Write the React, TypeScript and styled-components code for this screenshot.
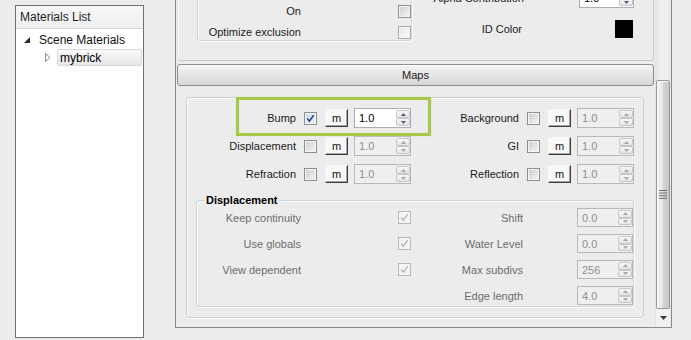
import React, {FC} from 'react'
import styled, {createGlobalStyle} from 'styled-components'

const GlobalStyle = createGlobalStyle`
  html, body {
    margin: 0;
    padding: 0;
  }
  body {
    background: #ececec;
    font-family: "Liberation Sans", Arial, sans-serif;
    font-size: 11px;
    color: #1a1a1a;
    overflow: hidden;
  }
`;

const Window = styled.div`
  display: flex;
  align-items: flex-start;
  width: 691px;
  height: 340px;
  padding-left: 15px;
  box-sizing: border-box;
  overflow: hidden;
`;

/* ---------- materials list ---------- */

const ListPanel = styled.div`
  flex: none;
  display: flex;
  flex-direction: column;
  margin-top: 5px;
  width: 129px;
  height: 333px;
  box-sizing: border-box;
  border: 1px solid #707070;
  background: #fff;
  font-size: 12px;
`;
const ListHeader = styled.div`
  height: 22px;
  line-height: 22px;
  padding-left: 4px;
  background: linear-gradient(#f7f7f7, #efefef);
  border-bottom: 1px solid #d8d8d8;
  color: #1e1e1e;
`;
const Tree = styled.div`
  display: flex;
  flex-direction: column;
  gap: 1px;
  padding-top: 2px;
`;
const TreeRow = styled.div<{ $indent: number }>`
  display: flex;
  align-items: center;
  height: 17px;
  padding-left: ${p => p.$indent}px;
  padding-right: 1px;
`;
const Expander = styled.span<{ $gap: number }>`
  flex: none;
  width: 11px;
  display: flex;
  justify-content: center;
  margin-right: ${p => p.$gap}px;
`;
const TreeText = styled.span`
  color: #111;
`;
const Selected = styled.span`
  flex: 1;
  height: 17px;
  box-sizing: border-box;
  display: flex;
  align-items: center;
  padding-left: 2px;
  border: 1px solid #d9d9d9;
  border-radius: 2px;
  background: linear-gradient(#fafafa, #e6e6e6);
  color: #000;
`;

/* ---------- scroll area ---------- */

const ScrollArea = styled.div`
  flex: none;
  display: flex;
  margin-left: 31px;
  margin-top: -2px;
  width: 497px;
  height: 330px;
  box-sizing: border-box;
  border: 1px solid #8a8a8a;
`;
const Viewport = styled.div`
  flex: 1;
  display: flex;
  flex-direction: column;
  justify-content: flex-end;
  overflow: hidden;
  padding-bottom: 9px;
  & > * {
    flex-shrink: 0;
  }
`;
const ScrollBar = styled.div`
  flex: none;
  width: 16px;
  display: flex;
  flex-direction: column;
  background: linear-gradient(90deg, #e2e2e2, #efefef 25%, #efefef 75%, #e6e6e6);
`;
const Track = styled.div`
  flex: 1;
`;
const Thumb = styled.div`
  height: 229px;
  margin: 0 1px;
  box-sizing: border-box;
  display: flex;
  align-items: center;
  justify-content: center;
  border: 1px solid #979797;
  border-radius: 2px;
  background: linear-gradient(90deg, #f4f4f4 0%, #e6e6e6 45%, #d3d3d3 55%, #c7c7c7 100%);
  box-shadow: inset 1px 1px 0 #fbfbfb;
`;
const ArrowButton = styled.div`
  height: 18px;
  margin: 0 1px;
  display: flex;
  align-items: center;
  justify-content: center;
  background: #f1f1f1;
`;

/* ---------- sections ---------- */

const SectionFrame = styled.div`
  margin: 0 1px;
  display: grid;
  grid-template-columns: 215px 1fr;
  align-items: end;
  padding: 0 19px 19px 19px;
  border: 1px solid #cbcbcb;
  border-left-color: #e4e4e4;
  border-radius: 0 0 3px 3px;
  box-shadow: inset 1px 1px 0 #fafafa;
`;
const GroupBox = styled.div<{ $pad: string }>`
  position: relative;
  box-sizing: border-box;
  border: 1px solid #d0d5d8;
  border-radius: 3px;
  padding: ${p => p.$pad};
  box-shadow: inset 1px 1px 0 #fbfbfb, 1px 1px 0 #fbfbfb;
`;
const GroupTitle = styled.span`
  position: absolute;
  top: -7px;
  left: 8px;
  padding: 0 1px;
  background: #ececec;
  font-weight: bold;
  color: #000;
  line-height: 13px;
`;
const Column = styled.div<{ $gap: number; $padBottom?: number }>`
  display: flex;
  flex-direction: column;
  gap: ${p => p.$gap}px;
  padding-bottom: ${p => p.$padBottom || 0}px;
`;
const PropRow = styled.div<{ $h: number }>`
  display: flex;
  align-items: center;
  height: ${p => p.$h}px;
`;
const PropLabel = styled.span<{ $w: number; $muted?: boolean }>`
  flex: none;
  width: ${p => p.$w}px;
  text-align: right;
  white-space: nowrap;
  color: ${p => (p.$muted ? '#6d6d6d' : '#1a1a1a')};
`;
const Push = styled.span`
  margin-left: auto;
  display: flex;
`;
const ColorSwatch = styled.span`
  width: 18px;
  height: 18px;
  margin-right: 1px;
  background: #000;
`;

const MapsHeader = styled.div`
  margin: 3px 1px 0 1px;
  height: 22px;
  box-sizing: border-box;
  display: flex;
  align-items: center;
  justify-content: center;
  border: 1px solid #8c8c8c;
  border-radius: 3px;
  background: linear-gradient(#f4f4f4, #e6e6e6 50%, #d6d6d6);
  box-shadow: inset 0 1px 0 #fdfdfd;
  color: #1a1a1a;
`;
const MapsBody = styled.div`
  position: relative;
  margin: 11px 11px 0 10px;
  padding: 10px 9px 10px 10px;
  border: 1px solid #d0d0d0;
  border-radius: 3px;
  box-shadow: inset 1px 1px 0 #fbfbfb, 0 1px 0 #fbfbfb;
`;
const MapGrid = styled.div`
  display: grid;
  grid-template-columns: 214px 223px;
  row-gap: 8px;
`;
const MapCell = styled.div`
  display: flex;
  align-items: center;
  justify-content: flex-end;
  height: 20px;
`;
const MapLabel = styled.span`
  margin-right: 8px;
  white-space: nowrap;
  color: #1a1a1a;
`;
const MButton = styled.span`
  flex: none;
  width: 23px;
  height: 18px;
  box-sizing: border-box;
  margin: 0 6px 0 8px;
  display: flex;
  align-items: center;
  justify-content: center;
  border: 1px solid;
  border-color: #f7f7f7 #3c3c3c #3c3c3c #f7f7f7;
  background: #f8f8f8;
  box-shadow: inset -1px -1px 0 #a6a6a6;
  color: #111;
  padding-bottom: 1px;
`;
const Highlight = styled.div`
  position: absolute;
  top: -1px;
  left: 49px;
  width: 195px;
  height: 39px;
  box-sizing: border-box;
  border: 3px solid #a7c94b;
  box-shadow: 0 0 1px #c9e08c, inset 0 0 1px #c9e08c;
  pointer-events: none;
`;
const DispGroup = styled(GroupBox)`
  margin: 16px 0 0 -1px;
  display: grid;
  grid-template-columns: 214px 1fr;
  align-items: start;
`;

/* ---------- controls ---------- */

const CheckFrame = styled.span<{ $state: 'normal' | 'disabled' | 'light' | 'active' }>`
  flex: none;
  width: 13px;
  height: 13px;
  box-sizing: border-box;
  display: flex;
  align-items: center;
  justify-content: center;
  border: 1px solid ${p => (p.$state === 'disabled' ? '#b9b9b9' : p.$state === 'light' ? '#aaaaaa' : '#8e8f8f')};
  background: ${p =>
    p.$state === 'disabled'
      ? '#f4f4f4'
      : p.$state === 'light'
        ? 'linear-gradient(135deg, #e6e6e6, #f9f9f9)'
        : p.$state === 'active'
          ? 'linear-gradient(135deg, #c4d8ec, #f2f7fc)'
          : 'linear-gradient(135deg, #cbcbcb, #f7f7f7)'};
  box-shadow: inset 0 0 0 1px #f5f5f5;
`;

const Checkbox: FC<{ checked?: boolean; state?: 'normal' | 'disabled' | 'light' | 'active' }> = ({checked, state = 'normal'}) => (
    <CheckFrame $state={state}>
        {checked && (
            <svg width="11" height="11" viewBox="0 0 11 11">
                <path d="M2.3 5.6 L4.4 8.2 L8.7 2.3" fill="none"
                      stroke={state === 'disabled' ? '#a9a9a9' : '#2a4384'}
                      strokeWidth={state === 'disabled' ? 1.1 : 1.6}/>
            </svg>
        )}
    </CheckFrame>
);

const SpinFrame = styled.span<{ $w: number; $h: number; $disabled?: boolean }>`
  flex: none;
  width: ${p => p.$w}px;
  height: ${p => p.$h}px;
  box-sizing: border-box;
  display: flex;
  border: 1px solid ${p => (p.$disabled ? '#b5b9bc' : '#abadb3')};
  background: ${p => (p.$disabled ? '#efefef' : '#fff')};
  color: ${p => (p.$disabled ? '#8e8e8e' : '#000')};
`;
const SpinValue = styled.span`
  flex: 1;
  display: flex;
  align-items: center;
  padding-left: 4px;
`;
const SpinButtons = styled.span`
  flex: none;
  width: 14px;
  display: flex;
  flex-direction: column;
  padding: 1px 0;
`;
const SpinButton = styled.span`
  flex: 1;
  display: flex;
  align-items: center;
  justify-content: center;
  border: 1px solid #c5c7c9;
  border-radius: 2px;
  background: linear-gradient(#f8f8f8, #e4e4e4);
`;

const Arrow: FC<{ up?: boolean; color: string }> = ({up, color}) => (
    <svg width="5" height="3" viewBox="0 0 5 3">
        <polygon points={up ? '2.5,0 5,3 0,3' : '0,0 5,0 2.5,3'} fill={color}/>
    </svg>
);

const Spin: FC<{ value: string; w?: number; h?: number; disabled?: boolean }> = ({value, w = 57, h = 20, disabled}) => {
    const c = disabled ? '#a8a8a8' : '#4b5e7c';
    return (
        <SpinFrame $w={w} $h={h} $disabled={disabled}>
            <SpinValue>{value}</SpinValue>
            <SpinButtons>
                <SpinButton><Arrow up color={c}/></SpinButton>
                <SpinButton><Arrow color={c}/></SpinButton>
            </SpinButtons>
        </SpinFrame>
    )
};

type MapItem = { label: string; checked?: boolean; active?: boolean }

const MapSlot: FC<MapItem> = ({label, checked, active}) => (
    <MapCell>
        <MapLabel>{label}</MapLabel>
        <Checkbox checked={checked} state={active ? 'active' : 'normal'}/>
        <MButton>m</MButton>
        <Spin value="1.0" disabled={!active}/>
    </MapCell>
);

const mapRows: MapItem[][] = [
    [{label: 'Bump', checked: true, active: true}, {label: 'Background'}],
    [{label: 'Displacement'}, {label: 'GI'}],
    [{label: 'Refraction'}, {label: 'Reflection'}],
];

const dispChecks = ['Keep continuity', 'Use globals', 'View dependent'];
const dispValues = [
    {label: 'Shift', value: '0.0'},
    {label: 'Water Level', value: '0.0'},
    {label: 'Max subdivs', value: '256'},
    {label: 'Edge length', value: '4.0'},
];

const App: FC = () => {
    return (
        <>
            <GlobalStyle/>
            <Window>
                <ListPanel>
                    <ListHeader>Materials List</ListHeader>
                    <Tree>
                        <TreeRow $indent={5}>
                            <Expander $gap={7}>
                                <svg width="6" height="6" viewBox="0 0 6 6">
                                    <polygon points="6,0 6,6 0,6" fill="#2b2b2b"/>
                                </svg>
                            </Expander>
                            <TreeText>Scene Materials</TreeText>
                        </TreeRow>
                        <TreeRow $indent={26}>
                            <Expander $gap={4}>
                                <svg width="6" height="9" viewBox="0 0 6 9">
                                    <polygon points="0.5,0.5 5,4.5 0.5,8.5" fill="none" stroke="#8a8a8a"/>
                                </svg>
                            </Expander>
                            <Selected>mybrick</Selected>
                        </TreeRow>
                    </Tree>
                </ListPanel>

                <ScrollArea>
                    <Viewport>
                        <SectionFrame>
                            <GroupBox $pad="4px 0 1px 0">
                                <Column $gap={7}>
                                    <PropRow $h={14}>
                                        <PropLabel $w={103}>Apply light linking</PropLabel>
                                        <Push><Checkbox/></Push>
                                    </PropRow>
                                    <PropRow $h={14}>
                                        <PropLabel $w={103}>On</PropLabel>
                                        <Push><Checkbox/></Push>
                                    </PropRow>
                                    <PropRow $h={14}>
                                        <PropLabel $w={103}>Optimize exclusion</PropLabel>
                                        <Push><Checkbox state="light"/></Push>
                                    </PropRow>
                                </Column>
                            </GroupBox>
                            <Column $gap={12} $padBottom={3}>
                                <PropRow $h={20}>
                                    <PropLabel $w={112}>Alpha Contribution</PropLabel>
                                    <Push><Spin value="1.0" w={55}/></Push>
                                </PropRow>
                                <PropRow $h={18}>
                                    <PropLabel $w={110}>ID Color</PropLabel>
                                    <Push><ColorSwatch/></Push>
                                </PropRow>
                            </Column>
                        </SectionFrame>

                        <MapsHeader>Maps</MapsHeader>

                        <MapsBody>
                            <MapGrid>
                                {mapRows.map(row => row.map(item => <MapSlot key={item.label} {...item}/>))}
                            </MapGrid>
                            <DispGroup $pad="7px 0 1px 0">
                                <GroupTitle>Displacement</GroupTitle>
                                <Column $gap={7}>
                                    {dispChecks.map(l => (
                                        <PropRow key={l} $h={19}>
                                            <PropLabel $w={104} $muted>{l}</PropLabel>
                                            <Push><Checkbox checked state="disabled"/></Push>
                                        </PropRow>
                                    ))}
                                </Column>
                                <Column $gap={7}>
                                    {dispValues.map(d => (
                                        <PropRow key={d.label} $h={19}>
                                            <PropLabel $w={112} $muted>{d.label}</PropLabel>
                                            <Push><Spin value={d.value} w={56} h={19} disabled/></Push>
                                        </PropRow>
                                    ))}
                                </Column>
                            </DispGroup>
                            <Highlight/>
                        </MapsBody>
                    </Viewport>

                    <ScrollBar>
                        <Track/>
                        <Thumb>
                            <svg width="8" height="9" viewBox="0 0 8 9">
                                {[0, 2.6, 5.2, 7.8].map(y => (
                                    <rect key={y} x="0" y={y} width="8" height="1" fill="#6e6e6e"/>
                                ))}
                            </svg>
                        </Thumb>
                        <ArrowButton>
                            <svg width="7" height="4" viewBox="0 0 7 4">
                                <polygon points="0,0 7,0 3.5,4" fill="#3c3c3c"/>
                            </svg>
                        </ArrowButton>
                    </ScrollBar>
                </ScrollArea>
            </Window>
        </>
    )
}

export default App
